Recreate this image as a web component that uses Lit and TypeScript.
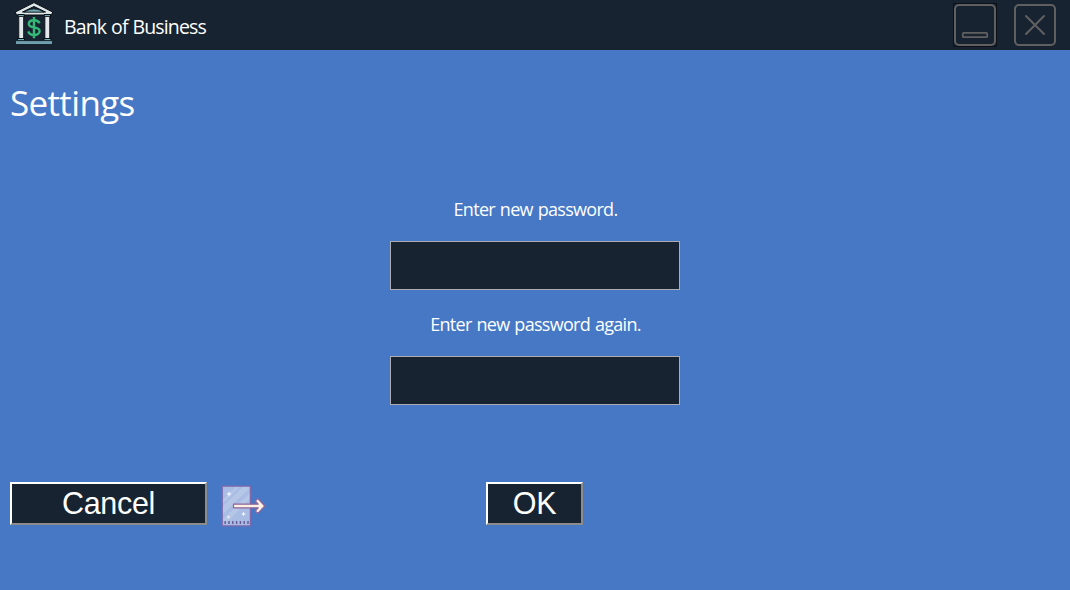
import { LitElement, html, css } from "lit";
import { customElement } from "lit/decorators.js";

@customElement("app-root")
export class AppRoot extends LitElement {
  static styles = css`
    :host { display: block; }
    * { box-sizing: border-box; }
    .window {
      width: 1070px; height: 590px; display: flex; flex-direction: column;
      background: #4678c6; color: #fff; overflow: hidden;
      font-family: "Open Sans", "Noto Sans", sans-serif;
    }
    .titlebar {
      flex: none; height: 50px; background: #182332; display: flex;
      align-items: center; padding: 0 13px 0 13px;
    }
    .bank { display: block; width: 42px; height: 50px; margin-right: 9px; }
    .title { flex: 1; font-size: 19.5px; line-height: 26px; margin-top: 4px; white-space: nowrap; }
    .title span { letter-spacing: -0.85px; word-spacing: 0.6px; }
    .controls { display: flex; gap: 16px; }
    .control { width: 44px; height: 44px; padding: 0; border: 0; background: none; display: block; }
    .control svg { display: block; }
    h1 {
      margin: 29px 0 0 10px; font-size: 35px; line-height: 48px; font-weight: 400;
      letter-spacing: -0.65px; flex: none;
    }
    .form { display: flex; flex-direction: column; align-items: center; margin-top: 69px; }
    label {
      font-size: 18px; line-height: 26px; letter-spacing: -0.7px; word-spacing: 0.9px;
      white-space: nowrap; padding-left: 1px;
    }
    .field {
      width: 290px; height: 49px; border: 1px solid #abadb3; border-radius: 0; background: #182332;
      color: #fff; margin: 19px 0 21px; padding: 0 10px; outline: 0; font: 24px "Liberation Sans", sans-serif;
    }
    .actions { display: flex; align-items: flex-start; margin: 56px 0 0 10px; }
    .btn {
      height: 43px; background: #182332; color: #fff; padding: 0 0 1px;
      border: 2px solid; border-color: #fff #8c8c8c #8c8c8c #fff; border-radius: 0;
      font: 30.5px/38px "Liberation Sans", Arial, sans-serif; letter-spacing: -0.3px;
    }
    .cancel { width: 197px; }
    .ok { width: 97px; margin-left: 220px; }
    .door { display: block; width: 45px; height: 44px; margin: 2px 0 0 14px; }
  `;

  render() {
    return html`
      <div class="window">
        <header class="titlebar">
          <svg class="bank" viewBox="13 0 42 50">
            <g stroke="#080d12" stroke-width="1" stroke-linejoin="round">
              <path d="M15.3 12 L34 2.6 L52.7 12 L51.5 15 H16.5 Z" fill="#dce5e8" />
              <path d="M22.5 12 L34 6.5 L45.5 12 Z" fill="#182332" />
              <path d="M24 12 Q34 6 44 12 Z" fill="#6faab6" stroke-width=".6" />
              <rect x="18" y="14.5" width="6.3" height="2.5" fill="#6faab6" />
              <rect x="44.2" y="14.5" width="6.3" height="2.5" fill="#6faab6" />
              <rect x="18.8" y="16.5" width="4.8" height="22.5" fill="#e2e8eb" stroke-width=".8" />
              <rect x="44.9" y="16.5" width="4.8" height="22.5" fill="#e2e8eb" stroke-width=".8" />
              <rect x="17.5" y="38.5" width="7" height="2.5" fill="#6faab6" />
              <rect x="44" y="38.5" width="7" height="2.5" fill="#6faab6" />
              <rect x="15.5" y="40.6" width="37" height="4" rx="1" fill="#6f9fae" stroke-width=".8" />
            </g>
            <path d="M34 17V38.2 M39.6 23.2C38.4 20.8 36.5 20.2 34 20.2C30.8 20.2 28.8 21.8 28.8 24C28.8 29 39.6 25.8 39.6 31C39.6 33.6 37 35 34 35C31 35 29 33.8 28.3 31.4" fill="none" stroke="#36b878" stroke-width="2.4" />
          </svg>
          <div class="title"><span>Bank of Business</span></div>
          <div class="controls">
            <button class="control" aria-label="Minimize">
              <svg width="44" height="44" fill="none">
                <rect x=".5" y=".5" width="43" height="43" stroke="#000" stroke-dasharray="1 1" />
                <rect x="2" y="2" width="40" height="40" rx="4" stroke="#606060" stroke-width="2" />
                <rect x="9.8" y="29.8" width="24.4" height="4.4" rx="1" stroke="#606060" stroke-width="1.8" />
              </svg>
            </button>
            <button class="control" aria-label="Close">
              <svg width="44" height="44" fill="none">
                <rect x="2" y="2" width="40" height="40" rx="4" stroke="#606060" stroke-width="2" />
                <path d="M13 13L31 31M31 13L13 31" stroke="#606060" stroke-width="2" stroke-linecap="round" />
              </svg>
            </button>
          </div>
        </header>
        <h1>Settings</h1>
        <div class="form">
          <label for="first">Enter new password.</label>
          <input class="field" id="first" type="password" />
          <label for="again">Enter new password again.</label>
          <input class="field" id="again" type="password" />
        </div>
        <div class="actions">
          <button class="btn cancel">Cancel</button>
          <svg class="door" viewBox="221 484 45 44">
            <rect x="222.2" y="486.2" width="28.2" height="39.6" fill="#a9bce3" />
            <path d="M223 506L243 487H249V489L223 514Z M223 519L250 493V499L228 521H223Z" fill="#b5c6e7" />
            <path d="M223 500L236 487H239L223 503Z" fill="#b5c6e7" />
            <rect x="222.2" y="486.2" width="28.2" height="39.6" rx=".6" fill="none" stroke="#8168ab" stroke-width="1.3" />
            <path d="M224.5 522.5H249" stroke="#665797" stroke-width="3" stroke-dasharray="1.4 2.4" />
            <path d="M229 491L229.8 493.2L232 494L229.8 494.8L229 497L228.2 494.8L226 494L228.2 493.2Z M243.5 511.5L244.2 513.3L246 514L244.2 514.7L243.5 516.5L242.8 514.7L241 514L242.8 513.3Z M228.5 515L229 516.5L230.5 517L229 517.5L228.5 519L228 517.5L226.5 517L228 516.5Z" fill="#f2f4ff" />
            <path d="M233.5 504.2H258.2L255.3 501L257.8 498.6L264.8 506L257.8 513.4L255.3 511L258.2 507.8H233.5Z" fill="#fdf0e4" stroke="#90659b" stroke-width="1.2" stroke-linejoin="round" />
          </svg>
          <button class="btn ok">OK</button>
        </div>
      </div>
    `;
  }
}
